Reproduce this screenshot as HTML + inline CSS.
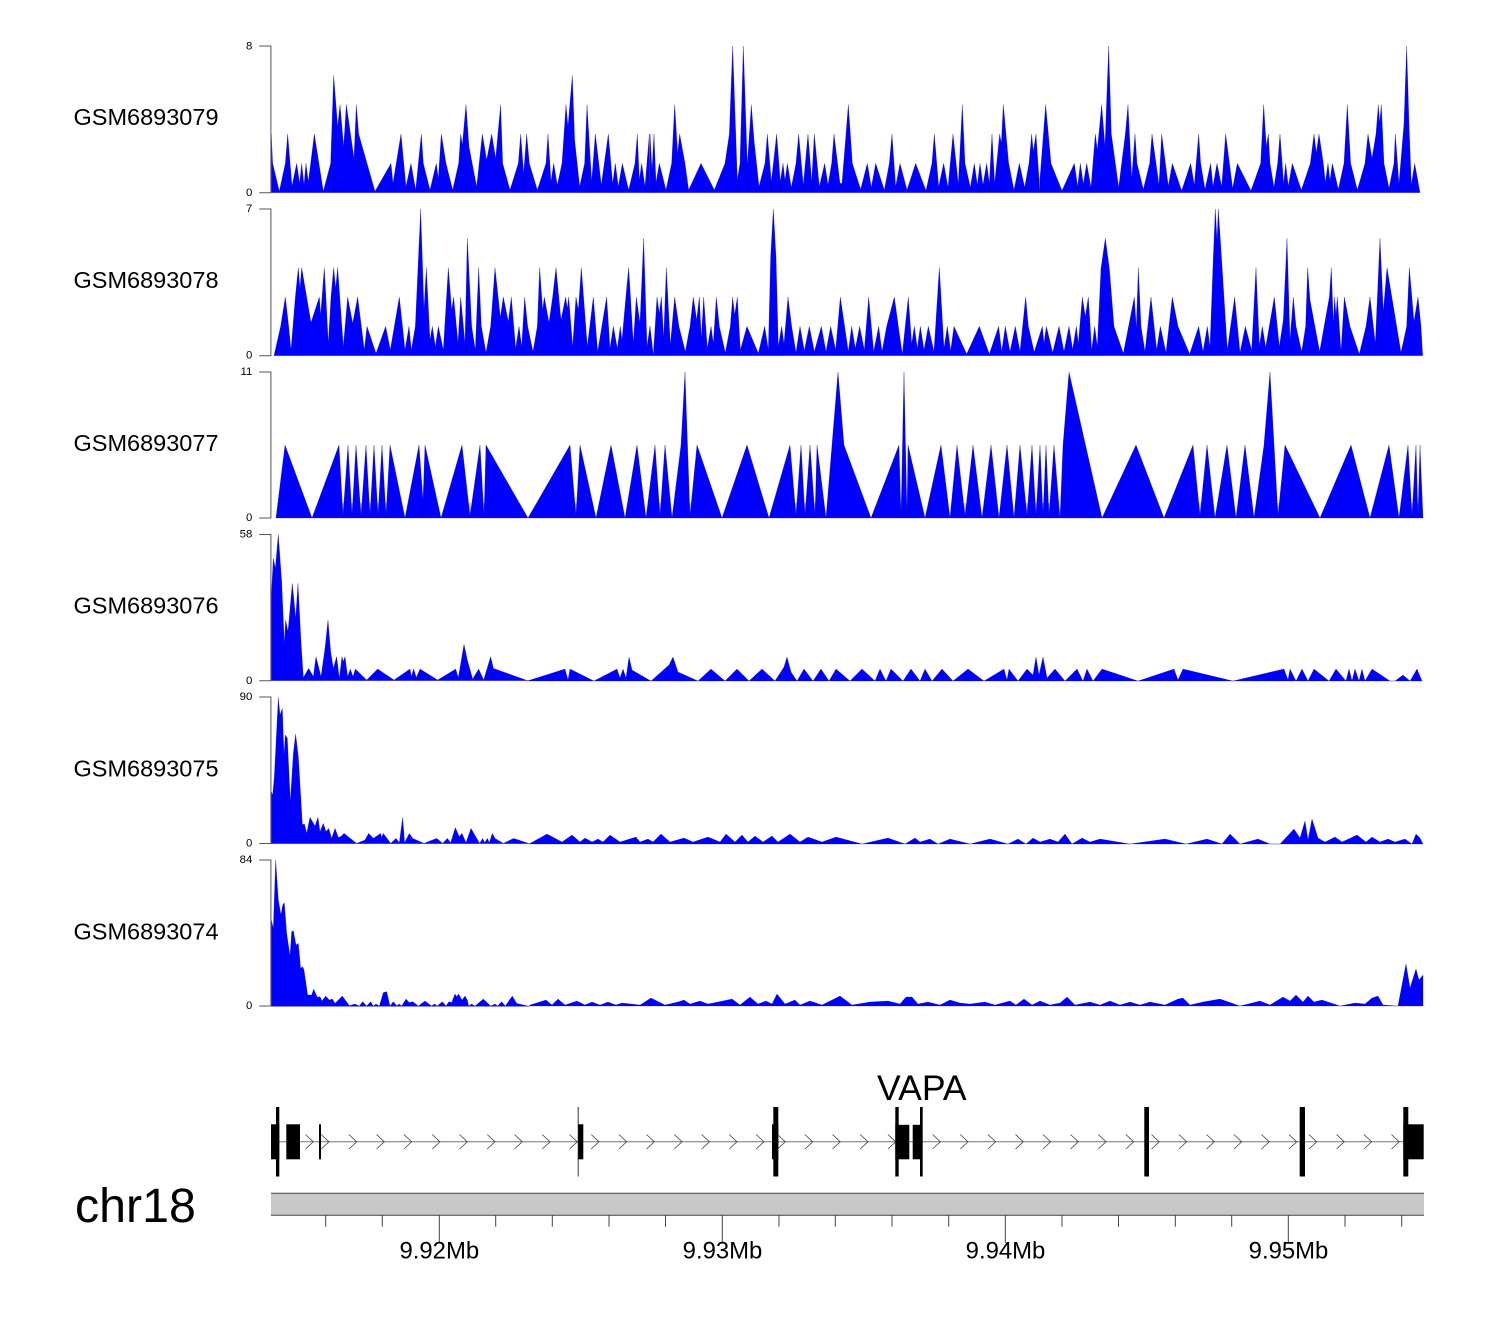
<!DOCTYPE html>
<html><head><meta charset="utf-8"><title>VAPA tracks</title>
<style>
html,body{margin:0;padding:0;background:#fff;width:1500px;height:1320px;overflow:hidden}
svg{display:block}
text{font-family:"Liberation Sans",sans-serif;fill:#000}
.l{font-size:23.5px}
.t{font-size:11.4px;text-anchor:end}
.m{font-size:23.9px;text-anchor:middle}
polygon{stroke:#0000b0;stroke-width:.25;stroke-miterlimit:20;vector-effect:non-scaling-stroke}
.v{stroke:#000070;stroke-width:.35;fill:none;vector-effect:non-scaling-stroke}
</style></head><body>
<svg width="1500" height="1320" viewBox="0 0 1500 1320" xmlns="http://www.w3.org/2000/svg">
<rect width="1500" height="1320" fill="#fff"/>

<!-- Track 1 -->
<g fill="#00f">
<g transform="translate(230,30) scale(.33333)">
<polygon points="124,488 124,312 128,400 148,484 166,400 173,312 186,468 200,400 209,460 215,400 222,465 228,400 235,456 253,312 280,484 302,400 311,136 323,290 330,224 341,350 349,224 372,385 379,224 386,312 435,484 483,400 489,460 513,312 528,470 543,400 557,480 574,312 580,400 600,480 619,400 625,445 634,312 648,400 668,480 686,400 692,312 697,345 708,224 717,350 740,470 757,312 770,390 785,312 797,385 812,224 818,400 840,480 865,400 872,312 881,430 890,312 898,400 922,480 948,400 954,312 963,455 971,400 982,465 996,400 1008,224 1014,290 1027,136 1034,330 1049,470 1064,400 1071,224 1085,455 1096,312 1114,465 1135,312 1148,462 1156,400 1165,470 1177,400 1196,480 1215,400 1222,312 1228,450 1235,400 1245,470 1258,312 1260,488"/>
<path class="v" d="M186 468V488M209 460V488M222 465V488M235 456V488M489 460V488M528 470V488M625 445V488M740 470V488M881 430V488M963 455V488M982 465V488M1049 470V488M1085 455V488M1114 465V488M1148 462V488M1165 470V488M1228 450V488M1245 470V488"/>
</g>
<g transform="translate(650,30) scale(.33333)">
<polygon points="0,488 0,312 6,420 12,312 18,458 28,400 48,480 65,400 74,224 83,370 89,312 105,400 116,480 153,400 193,480 225,400 238,312 248,48 262,450 270,400 280,48 292,405 304,224 312,330 327,470 345,400 352,312 364,455 380,312 391,455 399,400 405,452 412,400 424,472 438,400 446,312 460,465 474,312 485,455 493,312 508,470 524,400 534,465 545,400 552,312 570,460 576,460 588,312 595,224 607,400 632,478 652,400 664,472 677,400 703,480 718,400 726,312 737,470 750,400 771,480 797,400 828,482 846,400 853,312 866,470 881,400 894,472 909,312 925,462 937,224 945,400 961,472 973,400 982,465 990,400 999,465 1010,400 1018,460 1026,312 1034,460 1049,312 1054,340 1060,224 1076,400 1092,480 1108,400 1124,472 1137,400 1145,312 1150,365 1158,312 1167,445 1170,488"/>
<path class="v" d="M6 420V488M18 458V488M262 450V488M292 405V488M327 470V488M364 455V488M391 455V488M405 452V488M424 472V488M460 465V488M485 455V488M508 470V488M534 465V488M570 460V488M664 472V488M737 470V488M866 470V488M894 472V488M925 462V488M961 472V488M982 465V488M999 465V488M1018 460V488M1034 460V488M1124 472V488M1167 445V488"/>
</g>
<g transform="translate(1040,30) scale(.33333)">
<polygon points="0,488 0,445 17,224 33,400 66,482 103,400 113,470 121,400 130,462 140,400 153,472 166,312 172,360 185,224 195,350 206,48 214,312 236,472 256,312 264,224 275,445 285,312 291,400 310,478 329,400 336,312 357,465 365,312 385,468 397,400 425,482 452,400 463,465 476,312 482,400 495,478 512,400 519,470 531,400 545,470 557,312 578,475 592,400 633,482 662,400 671,224 679,350 685,312 690,400 702,472 713,400 720,312 731,460 737,400 745,468 757,400 784,480 811,400 822,312 829,368 837,312 850,400 856,458 864,400 870,452 877,400 895,478 912,400 922,224 932,400 952,480 975,400 984,312 996,385 1008,312 1015,224 1019,278 1024,224 1032,400 1047,475 1062,400 1066,312 1077,462 1092,280 1100,48 1107,280 1114,465 1124,400 1140,488"/>
<path class="v" d="M113 470V488M130 462V488M153 472V488M236 472V488M275 445V488M357 465V488M385 468V488M463 465V488M519 470V488M545 470V488M702 472V488M731 460V488M745 468V488M856 458V488M870 452V488M1077 462V488M1114 465V488"/>
</g>

<!-- Track 2 -->
<g transform="translate(230,200) scale(.33333)">
<polygon points="132,467 152,379 166,291 176,379 183,450 196,291 205,203 210,265 215,203 243,368 268,291 272,345 283,203 295,430 303,291 311,203 317,265 323,203 340,440 353,291 368,370 383,291 403,450 411,379 438,460 467,379 481,450 508,291 525,450 537,379 544,450 556,379 572,27 582,330 589,203 600,420 607,379 616,440 625,379 640,450 655,203 665,330 671,291 684,430 692,291 705,430 712,115 725,379 736,450 746,203 754,379 768,458 782,379 795,203 811,352 820,291 835,365 844,291 857,445 867,379 875,440 884,291 893,379 909,455 922,379 929,203 938,330 943,291 957,368 968,291 978,203 993,360 1007,291 1012,325 1016,291 1028,440 1038,291 1045,330 1054,203 1072,440 1090,291 1103,455 1130,291 1140,445 1150,379 1162,445 1171,379 1176,420 1190,265 1196,203 1210,430 1219,291 1230,370 1241,115 1251,440 1260,379 1260,467"/>
<path class="v" d="M183 450V467M295 430V467M340 440V467M403 450V467M481 450V467M525 450V467M544 450V467M600 420V467M616 440V467M640 450V467M684 430V467M705 430V467M736 450V467M857 445V467M875 440V467M1028 440V467M1072 440V467M1140 445V467M1162 445V467M1210 430V467M1251 440V467"/>
</g>
<g transform="translate(650,200) scale(.33333)">
<polygon points="0,467 0,379 10,465 21,291 28,340 34,291 41,415 49,203 61,435 74,291 87,380 106,455 120,379 130,291 140,360 148,291 154,415 161,291 172,445 183,379 190,430 199,291 208,379 226,458 241,379 248,291 254,345 262,291 271,450 291,379 325,460 344,379 355,450 362,170 370,27 378,170 385,440 395,379 402,432 414,291 425,379 438,458 450,379 463,452 478,379 493,455 514,379 528,455 542,379 557,450 571,291 595,455 605,379 616,445 629,379 643,450 656,291 671,455 686,379 696,455 710,379 733,291 745,379 757,462 775,291 785,432 793,379 802,445 811,379 822,450 835,379 852,455 868,203 882,445 892,379 902,452 912,379 950,462 988,379 1018,462 1046,379 1055,455 1066,379 1080,455 1096,379 1110,455 1127,291 1135,379 1153,458 1155,467"/>
<path class="v" d="M41 415V467M61 435V467M154 415V467M172 445V467M190 430V467M271 450V467M355 450V467M385 440V467M402 432V467M463 452V467M557 450V467M616 445V467M643 450V467M785 432V467M802 445V467M822 450V467M882 445V467"/>
</g>
<g transform="translate(1040,200) scale(.33333)">
<polygon points="-18,467 -18,458 7,379 12,430 19,379 38,458 57,379 72,455 87,379 98,448 109,379 115,430 127,291 136,350 145,291 155,450 164,379 172,440 183,205 196,115 208,205 222,379 250,460 283,291 289,385 295,203 303,379 315,455 333,291 350,450 361,379 378,458 397,291 414,379 449,462 476,379 489,455 502,379 510,440 520,170 526,27 531,120 535,27 545,180 562,450 584,291 600,458 616,379 635,450 648,203 658,438 667,379 677,442 703,291 718,440 730,360 741,115 750,420 760,291 768,379 785,455 797,379 803,203 810,300 839,455 868,291 874,203 880,370 884,291 888,345 892,291 903,455 913,291 930,379 958,462 978,379 990,291 1006,430 1020,115 1030,335 1041,203 1083,458 1100,379 1108,203 1122,365 1134,291 1143,379 1148,467"/>
<path class="v" d="M12 430V467M98 448V467M115 430V467M155 450V467M172 440V467M289 385V467M350 450V467M489 455V467M510 440V467M658 438V467M677 442V467M718 440V467M750 420V467M1006 430V467"/>
</g>

<!-- Track 3 -->
<polygon points="276,518 285,445 312,518 339,445 343,516 348,445 352,516 356,445 361,516 366,445 370,516 374,445 378,516 382,445 386,516 390,445 405,518 419,445 423,500 425,445 441,518 462,445 470,516 480,445 484,516 486,445 528,518 570,445 576,516 580,445 596,518 611,445 625,518 637,445 646,518 655,445 660,516 665,445 672,518 681,445 685,372 690,516 697,445 722,518 747,445 769,518 790,445 796,516 801,445 805,516 810,445 815,516 817,445 826,518 838,372 844,445 871,518 899,445 901,516 904,372 907,516 908,445 925,518 941,445 950,518 957,445 965,516 973,445 982,518 991,445 999,518 1007,445 1014,518 1020,445 1027,516 1032,445 1036,516 1040,445 1043,516 1046,445 1049,516 1054,445 1060,518 1063,445 1069,372 1102,518 1136,445 1164,518 1193,445 1200,516 1207,445 1215,518 1227,445 1236,518 1245,445 1254,518 1264,445 1270,372 1278,516 1285,445 1320,518 1351,445 1370,518 1389,445 1399,518 1408,445 1412,516 1416,445 1418,516 1420,445 1423,518"/>
<path class="v" d="M343 503V518M352 503V518M361 503V518M370 503V518M378 503V518M386 503V518M423 500V518M470 503V518M484 503V518M576 503V518M660 503V518M690 503V518M796 503V518M805 503V518M815 503V518M901 503V518M907 503V518M965 503V518M1027 503V518M1036 503V518M1043 503V518M1049 503V518M1200 503V518M1278 503V518M1412 503V518M1418 503V518"/>

<!-- Track 4 -->
<polygon transform="translate(230,525) scale(.33333)" points="124,467 124,210 130,100 136,130 145,28 155,170 163,355 167,285 174,320 187,175 197,280 204,175 213,350 220,458 236,430 250,455 258,395 273,455 285,370 294,285 302,380 310,430 320,395 328,460 336,395 340,410 345,395 353,455 361,432 369,455 376,432 410,465 443,432 492,465 540,432 544,455 551,432 559,458 570,432 623,465 677,432 685,458 702,358 712,405 728,462 746,432 761,465 782,395 790,430 893,467"/>
<polygon points="527,681 565,669 568,680 570,669 594,681 617,669 620,678 623,669 626,678 629,657 632,670 651,681 669,665 673,657 678,672 698,681 711,669 725,681 737,669 749,681 762,669 775,681 784,667 787,657 791,672 797,681 804,669 813,681 821,669 829,681 836,669 850,681 862,669 875,681 880,669 886,681 891,669 903,681 911,669 920,681 925,669 932,681 942,669 953,681 968,669 984,681 1004,669 1007,680 1009,669 1018,681 1027,669 1033,675 1036,657 1039,675 1043,657 1047,678 1055,669 1065,681 1077,669 1083,681 1087,669 1093,681 1102,669 1138,681 1174,669 1178,680 1183,669 1233,681 1284,669 1288,680 1290,669 1296,681 1302,669 1308,681 1314,669 1329,681 1336,669 1346,681 1349,669 1352,681 1355,669 1359,681 1362,669 1365,681 1372,669 1390,681 1395,681 1403,675 1410,681 1417,669 1422,681"/>

<!-- Track 5 -->
<polygon transform="translate(230,690) scale(.33333)" points="124,461 124,305 128,315 133,260 145,22 150,75 157,55 162,195 166,135 172,145 181,335 190,190 197,132 205,200 214,350 217,403 224,403 230,430 240,382 255,408 264,382 270,425 280,400 288,425 296,415 305,445 315,415 325,442 332,440 342,430 380,460 405,450 416,430 430,445 452,430 455,442 460,430 482,460 498,445 508,458 518,382 524,458 538,430 548,445 582,460 620,445 638,460 652,445 662,458 676,413 688,440 696,430 708,458 723,415 749,460 758,445 764,458 772,445 778,458 787,430 795,445 820,460 851,445 898,461"/>
<polygon points="529,844 547,834 562,842 572,835 580,842 585,838 592,842 598,839 603,842 610,835 620,842 636,837 640,842 648,839 653,842 661,834 670,842 684,838 693,842 708,837 720,842 726,834 735,842 742,835 748,842 755,836 763,842 772,836 778,842 790,834 800,842 808,837 822,842 836,837 862,844 888,838 905,844 915,838 920,842 930,839 938,844 950,839 970,844 990,839 1008,844 1018,839 1026,844 1033,838 1040,842 1050,839 1058,842 1065,834 1072,844 1082,838 1090,842 1100,839 1130,844 1165,839 1186,844 1207,839 1222,844 1230,834 1240,844 1258,839 1270,844 1280,844 1294,829 1300,838 1305,821 1308,840 1312,819 1318,838 1325,842 1335,837 1342,842 1357,835 1366,842 1372,837 1380,842 1388,839 1395,842 1405,839 1412,844 1416,834 1420,838 1423,844"/>

<!-- Track 6 -->
<polygon transform="translate(230,850) scale(.33333)" points="124,469 124,210 130,235 137,30 145,150 153,195 158,165 163,158 170,250 180,318 185,245 190,242 198,285 205,280 212,355 218,350 222,360 233,435 240,435 245,435 251,417 262,442 270,440 276,453 287,438 298,450 307,447 315,460 337,438 358,467 375,462 388,468 398,455 410,468 422,455 430,468 438,462 448,468 460,428 470,425 480,468 490,455 500,467 508,462 515,468 528,447 538,458 548,455 565,468 585,453 605,468 613,462 622,468 637,455 648,468 657,455 665,458 675,432 680,440 686,432 696,450 705,438 712,450 716,468 725,462 735,468 760,447 782,468 795,462 803,468 815,455 826,468 847,438 860,460 898,469"/>
<polygon points="529,1006 530,1005 546,1000 552,1005 558,999 565,1005 577,1001 585,1005 592,1002 600,1005 608,1002 616,1005 622,1003 640,1005 651,998 665,1005 678,1002 684,1000 690,1004 700,1001 708,1004 718,1002 732,999 740,1005 750,997 758,1004 766,1001 772,1004 777,994 785,1004 795,1000 800,1005 810,1001 822,1005 840,996 852,1005 870,1002 888,1001 900,1004 906,997 912,997 918,1004 928,1002 940,1005 950,1000 960,1003 970,1004 985,1002 995,1005 1010,1001 1016,1005 1024,999 1032,1005 1040,1001 1050,1005 1060,1003 1067,997 1075,1005 1090,1002 1100,1005 1110,1001 1120,1005 1130,1002 1140,1005 1150,1002 1165,1005 1178,999 1183,998 1190,1005 1203,1002 1220,999 1240,1006 1260,1001 1270,1005 1283,997 1290,1001 1296,995 1303,1002 1308,996 1314,1002 1322,1000 1340,1006 1355,1003 1365,1004 1372,998 1378,996 1383,1005 1398,1006 1406,964 1410,988 1416,969 1419,980 1423,975 1423,1006"/>
</g>

<!-- Axes -->
<g stroke="#555" stroke-width="1" fill="none">
<path d="M259.3 46H270.9V192.8H259.3"/>
<path d="M259.3 209H270.9V355.7H259.3"/>
<path d="M259.3 372H270.9V518H259.3"/>
<path d="M259.3 534.5H270.9V680.7H259.3"/>
<path d="M259.3 697H270.9V843.5H259.3"/>
<path d="M259.3 860H270.9V1006H259.3"/>
</g>
<g>
<text class="t" x="252.3" y="49.7">8</text><text class="t" x="252.3" y="196">0</text>
<text class="t" x="252.3" y="212.2">7</text><text class="t" x="252.3" y="358.7">0</text>
<text class="t" x="252.3" y="375.2">11</text><text class="t" x="252.3" y="521.2">0</text>
<text class="t" x="252.3" y="537.7">58</text><text class="t" x="252.3" y="684">0</text>
<text class="t" x="252.3" y="700.2">90</text><text class="t" x="252.3" y="846.7">0</text>
<text class="t" x="252.3" y="863.2">84</text><text class="t" x="252.3" y="1009.2">0</text>
</g>
<text class="l" x="73.5" y="125">GSM6893079</text>
<text class="l" x="73.5" y="288">GSM6893078</text>
<text class="l" x="73.5" y="451">GSM6893077</text>
<text class="l" x="73.5" y="613.5">GSM6893076</text>
<text class="l" x="73.5" y="776.5">GSM6893075</text>
<text class="l" x="73.5" y="939.5">GSM6893074</text>

<!-- Gene model -->
<text x="877" y="1100" style="font-size:35.6px">VAPA</text>
<path d="M271 1141.8H1423" stroke="#777" stroke-width="1" fill="none"/>
<path fill="none" stroke="#444" stroke-width=".8" d="M305.5 1134.5L313.3 1141.8L305.5 1149M321.2 1134.5L329 1141.8L321.2 1149M348.9 1134.5L356.7 1141.8L348.9 1149M376.5 1134.5L384.3 1141.8L376.5 1149M403.9 1134.5L411.7 1141.8L403.9 1149M432.2 1134.5L440 1141.8L432.2 1149M459.5 1134.5L467.3 1141.8L459.5 1149M487.2 1134.5L495 1141.8L487.2 1149M514.5 1134.5L522.3 1141.8L514.5 1149M542.2 1134.5L550 1141.8L542.2 1149M569.5 1134.5L577.3 1141.8L569.5 1149M591.2 1134.5L599 1141.8L591.2 1149M618.9 1134.5L626.7 1141.8L618.9 1149M646.5 1134.5L654.3 1141.8L646.5 1149M674.2 1134.5L682 1141.8L674.2 1149M701.7 1134.5L709.5 1141.8L701.7 1149M729.2 1134.5L737 1141.8L729.2 1149M756.2 1134.5L764 1141.8L756.2 1149M777.5 1134.5L785.3 1141.8L777.5 1149M804.9 1134.5L812.7 1141.8L804.9 1149M832.5 1134.5L840.3 1141.8L832.5 1149M860.2 1134.5L868 1141.8L860.2 1149M887.9 1134.5L895.7 1141.8L887.9 1149M932.5 1134.5L940.3 1141.8L932.5 1149M960.2 1134.5L968 1141.8L960.2 1149M987.9 1134.5L995.7 1141.8L987.9 1149M1015.5 1134.5L1023.3 1141.8L1015.5 1149M1042.9 1134.5L1050.7 1141.8L1042.9 1149M1070.5 1134.5L1078.3 1141.8L1070.5 1149M1098.2 1134.5L1106 1141.8L1098.2 1149M1125.9 1134.5L1133.7 1141.8L1125.9 1149M1151.5 1134.5L1159.3 1141.8L1151.5 1149M1178.9 1134.5L1186.7 1141.8L1178.9 1149M1206.5 1134.5L1214.3 1141.8L1206.5 1149M1233.9 1134.5L1241.7 1141.8L1233.9 1149M1261.5 1134.5L1269.3 1141.8L1261.5 1149M1288.9 1134.5L1296.7 1141.8L1288.9 1149M1308.9 1134.5L1316.7 1141.8L1308.9 1149M1336.5 1134.5L1344.3 1141.8L1336.5 1149M1363.9 1134.5L1371.7 1141.8L1363.9 1149M1391.5 1134.5L1399.3 1141.8L1391.5 1149"/>
<g fill="#000">
<rect x="271" y="1124.3" width="8.3" height="35"/>
<rect x="276" y="1107" width="3.3" height="69.5"/>
<rect x="286.3" y="1124.3" width="13.7" height="35"/>
<rect x="319" y="1124.3" width="2" height="35"/>
<rect x="577.7" y="1107" width="1" height="69.5" fill="#333"/>
<rect x="578.3" y="1124.3" width="5" height="35"/>
<rect x="772" y="1124.3" width="6.3" height="35"/>
<rect x="773.3" y="1107" width="5" height="69.5"/>
<rect x="895.3" y="1107" width="3.4" height="69.5"/>
<rect x="895.3" y="1124.8" width="14" height="34.5"/>
<rect x="912.7" y="1124.8" width="8" height="34.5"/>
<rect x="920" y="1107" width="2.7" height="69.5"/>
<rect x="1144.3" y="1107" width="4.7" height="69.5"/>
<rect x="1299.7" y="1107" width="5.3" height="69.5"/>
<rect x="1403.3" y="1107" width="5" height="69.5"/>
<rect x="1403.3" y="1124.3" width="20.4" height="35"/>
</g>

<!-- Chromosome axis -->
<text x="75" y="1222" style="font-size:48.3px">chr18</text>
<rect x="271" y="1193.3" width="1153" height="22" fill="#c8c8c8"/>
<path d="M271 1193.3H1424M271 1215.3H1424" stroke="#444" stroke-width="1" fill="none"/>
<path fill="none" stroke="#444" stroke-width="1" d="M325.7 1215.3V1226.7M382.3 1215.3V1226.7M439.3 1215.3V1243M495.7 1215.3V1226.7M552.3 1215.3V1226.7M609 1215.3V1226.7M665.5 1215.3V1226.7M722.3 1215.3V1243M779 1215.3V1226.7M835.3 1215.3V1226.7M892 1215.3V1226.7M948.7 1215.3V1226.7M1005.3 1215.3V1243M1062 1215.3V1226.7M1118.5 1215.3V1226.7M1175.3 1215.3V1226.7M1231.7 1215.3V1226.7M1288.3 1215.3V1243M1345 1215.3V1226.7M1401.7 1215.3V1226.7"/>
<text class="m" x="439.3" y="1258.5">9.92Mb</text>
<text class="m" x="722.5" y="1258.5">9.93Mb</text>
<text class="m" x="1005.5" y="1258.5">9.94Mb</text>
<text class="m" x="1288.5" y="1258.5">9.95Mb</text>
</svg>
</body></html>
